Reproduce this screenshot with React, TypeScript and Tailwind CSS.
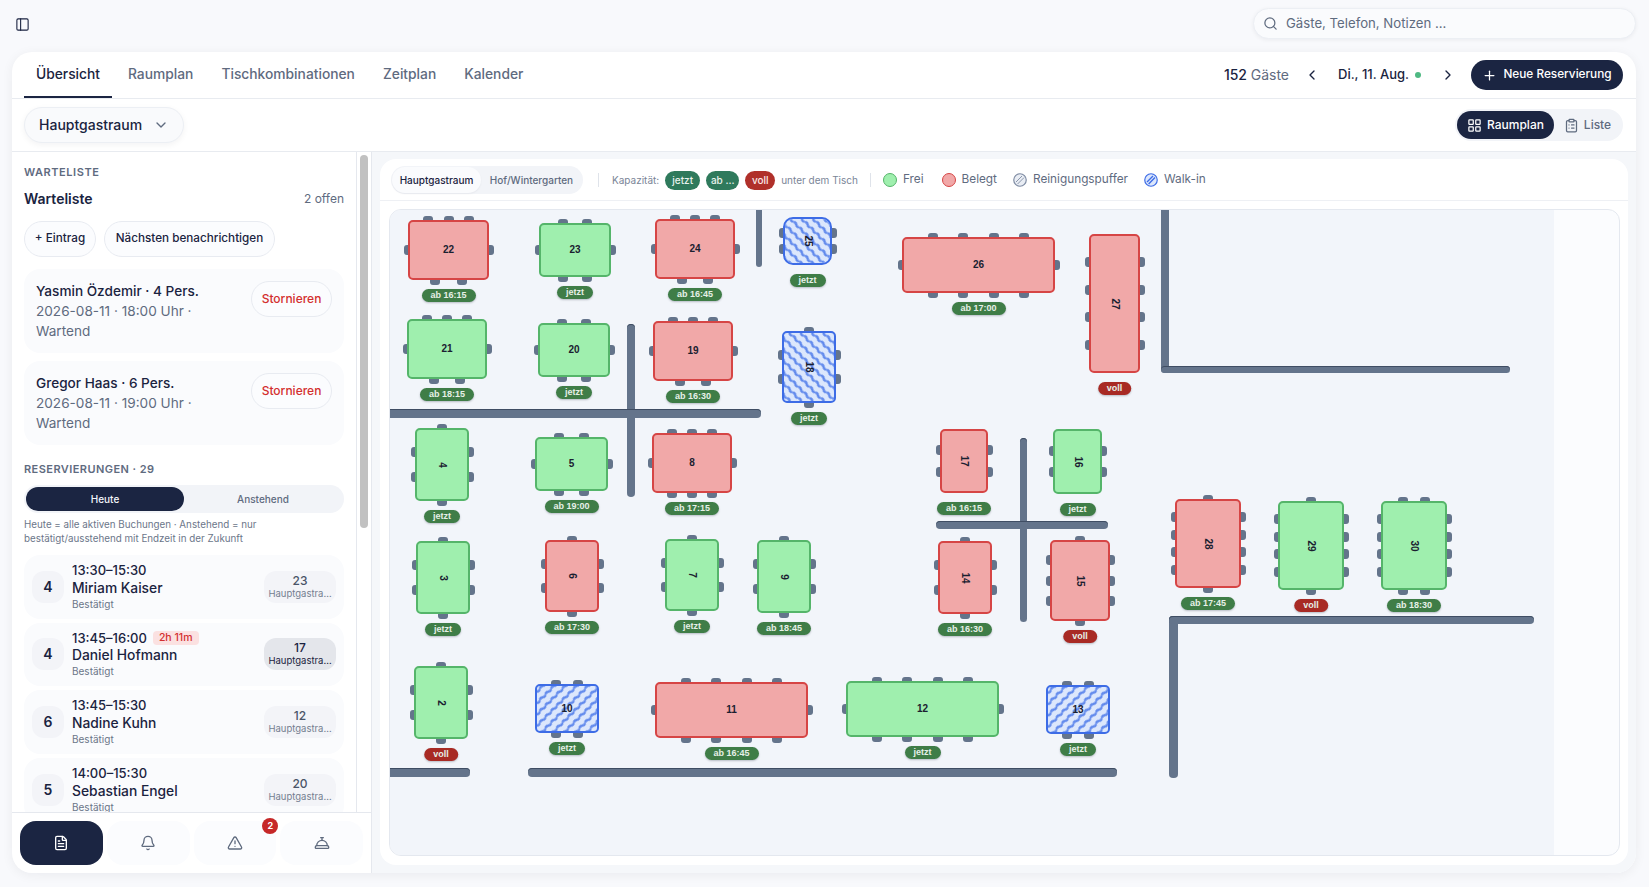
import {
  Bell,
  ChevronDown,
  ChevronLeft,
  ChevronRight,
  ClipboardList,
  ConciergeBell,
  FileText,
  LayoutGrid,
  PanelLeft,
  Plus,
  Search,
  TriangleAlert,
} from "lucide-react";

type Kind = "free" | "busy" | "walk";

type FloorTable = {
  n: number;
  x: number;
  y: number;
  w: number;
  h: number;
  kind: Kind;
  chairs: [number, number, number, number]; // top, bottom, left, right
  label: string;
  r?: number;
};

// page coordinates, converted to canvas coordinates when drawn
const ORIGIN_X = 390;
const ORIGIN_Y = 210;

const floorTables: FloorTable[] = [
  { n: 22, x: 408, y: 220, w: 81, h: 60, kind: "busy", chairs: [3, 2, 1, 1], label: "ab 16:15" },
  { n: 23, x: 539, y: 223, w: 72, h: 54, kind: "free", chairs: [2, 2, 1, 1], label: "jetzt" },
  { n: 24, x: 655, y: 219, w: 80, h: 60, kind: "busy", chairs: [3, 2, 1, 1], label: "ab 16:45" },
  { n: 25, x: 783, y: 217, w: 49, h: 48, kind: "walk", chairs: [0, 0, 2, 2], label: "jetzt", r: 10 },
  { n: 26, x: 902, y: 237, w: 153, h: 56, kind: "busy", chairs: [4, 4, 1, 1], label: "ab 17:00" },
  { n: 27, x: 1089, y: 234, w: 51, h: 139, kind: "busy", chairs: [0, 0, 4, 4], label: "voll" },
  { n: 21, x: 407, y: 319, w: 80, h: 60, kind: "free", chairs: [3, 2, 1, 1], label: "ab 18:15" },
  { n: 20, x: 538, y: 323, w: 72, h: 54, kind: "free", chairs: [2, 2, 1, 1], label: "jetzt" },
  { n: 19, x: 653, y: 321, w: 80, h: 60, kind: "busy", chairs: [3, 2, 1, 1], label: "ab 16:30" },
  { n: 18, x: 782, y: 331, w: 54, h: 72, kind: "walk", chairs: [1, 1, 2, 2], label: "jetzt" },
  { n: 4, x: 415, y: 428, w: 54, h: 73, kind: "free", chairs: [1, 1, 2, 2], label: "jetzt" },
  { n: 5, x: 535, y: 437, w: 73, h: 54, kind: "free", chairs: [2, 2, 1, 1], label: "ab 19:00" },
  { n: 8, x: 652, y: 433, w: 80, h: 60, kind: "busy", chairs: [3, 3, 1, 1], label: "ab 17:15" },
  { n: 17, x: 940, y: 429, w: 48, h: 64, kind: "busy", chairs: [0, 0, 2, 2], label: "ab 16:15" },
  { n: 16, x: 1053, y: 429, w: 49, h: 65, kind: "free", chairs: [0, 0, 2, 2], label: "jetzt" },
  { n: 3, x: 416, y: 541, w: 54, h: 73, kind: "free", chairs: [1, 1, 2, 2], label: "jetzt" },
  { n: 6, x: 545, y: 540, w: 54, h: 72, kind: "busy", chairs: [1, 1, 2, 2], label: "ab 17:30" },
  { n: 7, x: 665, y: 539, w: 54, h: 72, kind: "free", chairs: [1, 1, 2, 2], label: "jetzt" },
  { n: 9, x: 757, y: 540, w: 54, h: 73, kind: "free", chairs: [1, 1, 2, 2], label: "ab 18:45" },
  { n: 14, x: 938, y: 541, w: 54, h: 73, kind: "busy", chairs: [1, 1, 2, 2], label: "ab 16:30" },
  { n: 15, x: 1050, y: 540, w: 60, h: 81, kind: "busy", chairs: [1, 1, 3, 3], label: "voll" },
  { n: 28, x: 1175, y: 499, w: 66, h: 89, kind: "busy", chairs: [1, 1, 4, 4], label: "ab 17:45" },
  { n: 29, x: 1278, y: 501, w: 66, h: 89, kind: "free", chairs: [1, 1, 4, 4], label: "voll" },
  { n: 30, x: 1381, y: 501, w: 66, h: 89, kind: "free", chairs: [2, 2, 4, 4], label: "ab 18:30" },
  { n: 2, x: 414, y: 666, w: 54, h: 73, kind: "free", chairs: [1, 1, 2, 2], label: "voll" },
  { n: 10, x: 535, y: 684, w: 64, h: 49, kind: "walk", chairs: [2, 2, 0, 0], label: "jetzt" },
  { n: 11, x: 655, y: 682, w: 153, h: 56, kind: "busy", chairs: [4, 4, 1, 1], label: "ab 16:45" },
  { n: 12, x: 846, y: 681, w: 153, h: 56, kind: "free", chairs: [4, 4, 1, 1], label: "jetzt" },
  { n: 13, x: 1046, y: 685, w: 64, h: 49, kind: "walk", chairs: [2, 2, 0, 0], label: "jetzt" },
];

// x0, y0, x1, y1
const walls = [
  [756, 205, 762, 267],
  [627, 324, 635, 497],
  [385, 409, 761, 418],
  [1161, 205, 1169, 373],
  [1161, 366, 1510, 373],
  [1020, 438, 1027, 622],
  [936, 521, 1108, 529],
  [1169, 616, 1178, 778],
  [1169, 616, 1534, 624],
  [385, 768, 470, 777],
  [528, 768, 1117, 777],
];

const reservations = [
  { size: 4, time: "13:30–15:30", name: "Miriam Kaiser", table: 23 },
  { size: 4, time: "13:45–16:00", name: "Daniel Hofmann", table: 17, late: "2h 11m" },
  { size: 6, time: "13:45–15:30", name: "Nadine Kuhn", table: 12 },
  { size: 5, time: "14:00–15:30", name: "Sebastian Engel", table: 20 },
];

const waiting = [
  { name: "Yasmin Özdemir · 4 Pers.", info: "2026-08-11 · 18:00 Uhr · Wartend" },
  { name: "Gregor Haas · 6 Pers.", info: "2026-08-11 · 19:00 Uhr · Wartend" },
];

function Chairs({ count, side }: { count: number; side: "top" | "bottom" | "left" | "right" }) {
  const cls = {
    top: "-top-[4.5px] -translate-x-1/2",
    bottom: "-bottom-[4.5px] -translate-x-1/2",
    left: "-left-[4.5px] -translate-y-1/2",
    right: "-right-[4.5px] -translate-y-1/2",
  }[side];
  return (
    <>
      {Array.from({ length: count }).map((_, i) => {
        const pos = `${((i + 1) / (count + 1)) * 100}%`;
        const style = side === "top" || side === "bottom" ? { left: pos } : { top: pos };
        return <div key={i} style={style} className={`absolute h-[10px] w-[10px] rounded-[3px] bg-[#64748b] ${cls}`} />;
      })}
    </>
  );
}

function Hatch({ id, flip }: { id: string; flip: boolean }) {
  return (
    <svg className="absolute inset-0 h-full w-full">
      <defs>
        <pattern
          id={id}
          width="8"
          height="8"
          patternUnits="userSpaceOnUse"
          patternTransform={flip ? "rotate(45)" : "rotate(-45)"}
        >
          <path d="M0 4 Q2 2.5 4 4 T8 4" fill="none" stroke="#5f88ec" strokeWidth="2.2" />
        </pattern>
      </defs>
      <rect width="100%" height="100%" fill={`url(#${id})`} />
    </svg>
  );
}

function TableNode({ t }: { t: FloorTable }) {
  const surface = {
    free: "bg-[#9fefae] border-[#55b56a]",
    busy: "bg-[#f1a8a8] border-[#d64545]",
    walk: "bg-[#dce7fc] border-[#3d6ce6]",
  }[t.kind];
  const rotated = t.h > t.w || t.n === 25;
  return (
    <div className="absolute" style={{ left: t.x - ORIGIN_X, top: t.y - ORIGIN_Y, width: t.w, height: t.h }}>
      <Chairs count={t.chairs[0]} side="top" />
      <Chairs count={t.chairs[1]} side="bottom" />
      <Chairs count={t.chairs[2]} side="left" />
      <Chairs count={t.chairs[3]} side="right" />
      <div
        className={`absolute inset-0 flex items-center justify-center overflow-hidden border-2 ${surface}`}
        style={{ borderRadius: t.r ?? 5 }}
      >
        {t.kind === "walk" && <Hatch id={`hatch-${t.n}`} flip={rotated} />}
        <span
          className={`relative font-['Liberation_Sans',Arial,sans-serif] text-[10px] leading-none font-bold text-[#1a2030] ${
            rotated ? "rotate-90" : ""
          }`}
        >
          {t.n}
        </span>
      </div>
      <div
        className={`absolute top-[calc(100%+9px)] left-1/2 flex h-[13px] -translate-x-1/2 items-center rounded-full px-[9px] font-['Liberation_Sans',Arial,sans-serif] text-[9px] font-bold whitespace-nowrap text-[#e6f0e8] shadow-[0_1px_2px_rgba(15,23,42,0.25)] ${
          t.label === "voll" ? "bg-[#a82a24]" : "bg-[#3f7d47]"
        }`}
      >
        {t.label}
      </div>
    </div>
  );
}

function FloorPlan() {
  return (
    <div className="relative h-full w-[1164px] overflow-hidden bg-[#f2f5fa]">
      {walls.map(([x0, y0, x1, y1], i) => (
        <div
          key={i}
          className="absolute rounded-[4px] bg-[#64748b] shadow-[inset_0_1px_0_#3f4d63]"
          style={{ left: x0 - ORIGIN_X, top: y0 - ORIGIN_Y, width: x1 - x0, height: y1 - y0 }}
        />
      ))}
      {floorTables.map((t) => (
        <TableNode key={t.n} t={t} />
      ))}
    </div>
  );
}

function LegendDot({ kind }: { kind: "free" | "busy" | "clean" | "walk" }) {
  if (kind === "free") return <span className="h-[14px] w-[14px] rounded-full border-[1.5px] border-[#55b56a] bg-[#9fefae]" />;
  if (kind === "busy") return <span className="h-[14px] w-[14px] rounded-full border-[1.5px] border-[#d64545] bg-[#f1a8a8]" />;
  const stroke = kind === "walk" ? "#3d6ce6" : "#7f8ca3";
  const fill = kind === "walk" ? "#dce7fc" : "#e9edf4";
  return (
    <svg width="14" height="14" viewBox="0 0 14 14">
      <circle cx="7" cy="7" r="6.25" fill={fill} stroke={stroke} strokeWidth="1.2" />
      <path d="M3 9 L9 3 M4.6 11 L11 4.6" stroke={stroke} strokeWidth={kind === "walk" ? 1.4 : 0.9} />
    </svg>
  );
}

function Sidebar() {
  return (
    <aside className="flex w-[359px] shrink-0 flex-col">
      <div className="flex min-h-0 flex-1">
        <div className="w-[345px] shrink-0 overflow-hidden border-r border-[#e5e8ee] px-3 pt-3">
          <div className="text-[11px] leading-4 font-semibold tracking-[0.05em] text-[#5f6b7f]">WARTELISTE</div>
          <div className="mt-[9px] flex h-5 items-center justify-between">
            <span className="text-sm font-semibold text-[#1a2340]">Warteliste</span>
            <span className="text-xs text-[#5f6b7f]">2 offen</span>
          </div>
          <div className="mt-3 flex gap-2">
            <button className="h-9 w-[72px] rounded-full border border-[#e8ebf1] bg-[#fbfcfe] text-[11.7px] font-medium text-[#1a2340]">
              + Eintrag
            </button>
            <button className="h-9 w-[171px] rounded-full border border-[#e8ebf1] bg-[#fbfcfe] text-[11.7px] font-medium text-[#1a2340]">
              Nächsten benachrichtigen
            </button>
          </div>
          <div className="mt-3 flex flex-col gap-2">
            {waiting.map((w) => (
              <div key={w.name} className="flex items-start gap-3 rounded-2xl bg-[#fafbfd] p-3">
                <div className="w-[203px] text-[13.6px] leading-5">
                  <div className="font-medium text-[#1a2340]">{w.name}</div>
                  <div className="text-[#5f6b7f]">{w.info}</div>
                </div>
                <button className="ml-auto h-9 w-[81px] rounded-full border border-[#e8ebf1] bg-[#fbfcfe] text-xs font-medium text-[#d32f2f]">
                  Stornieren
                </button>
              </div>
            ))}
          </div>
          <div className="mt-4 text-[11px] leading-4 font-semibold tracking-[0.04em] text-[#5f6b7f]">
            RESERVIERUNGEN · 29
          </div>
          <div className="mt-2 flex h-7 items-center rounded-full bg-[#f2f4f8] p-[2px]">
            <div className="flex h-6 flex-1 items-center justify-center rounded-full bg-[#1b2542] text-[10px] font-medium text-[#f4f6fa]">
              Heute
            </div>
            <div className="flex h-6 flex-1 items-center justify-center text-[10px] font-medium text-[#5f6b7f]">
              Anstehend
            </div>
          </div>
          <p className="mt-[5px] text-[9.8px] leading-[14px] text-[#6b7689]">
            Heute = alle aktiven Buchungen · Anstehend = nur bestätigt/ausstehend mit Endzeit in der Zukunft
          </p>
          <div className="mt-[9px] flex flex-col gap-1">
            {reservations.map((r) => (
              <div key={r.name} className="flex h-[63.67px] shrink-0 items-center gap-2 rounded-2xl bg-[#fafbfd] px-2">
                <div className="flex h-8 w-8 items-center justify-center rounded-xl bg-[#f3f4f8] text-sm font-semibold text-[#1a2340]">
                  {r.size}
                </div>
                <div className="min-w-0 flex-1">
                  <div className="flex h-4 items-center gap-[6px] text-[13px] font-medium text-[#1a2340]">
                    {r.time}
                    {r.late && (
                      <span className="rounded-[4px] bg-[#fbe1e1] px-[6px] py-px text-[10.5px] leading-3 font-medium text-[#d32f2f]">
                        {r.late}
                      </span>
                    )}
                  </div>
                  <div className="text-[13.8px] leading-[18px] font-medium text-[#1a2340]">{r.name}</div>
                  <div className="text-[10px] leading-[14px] text-[#6b7689]">Bestätigt</div>
                </div>
                <div
                  className={`flex h-8 w-[72px] flex-col items-center justify-center rounded-xl ${
                    r.late ? "bg-[#e4e6eb] text-[#1a2340]" : "bg-[#f3f4f8] text-[#4a5568]"
                  }`}
                >
                  <span className="text-xs leading-[14px] font-medium">{r.table}</span>
                  <span className={`text-[9.5px] leading-3 whitespace-nowrap ${r.late ? "" : "text-[#737e90]"}`}>
                    Hauptgastra…
                  </span>
                </div>
              </div>
            ))}
          </div>
        </div>
        <div className="flex-1 pt-[3px]">
          <div className="mx-auto h-[373px] w-2 rounded-full bg-[#c1c1c1]" />
        </div>
      </div>
      <div className="grid h-[61px] shrink-0 grid-cols-4 gap-1 border-t border-[#e5e8ee] px-2 pt-2 pb-2">
        <button className="flex items-center justify-center rounded-2xl bg-[#1b2542] text-white">
          <FileText size={16} />
        </button>
        <button className="flex items-center justify-center rounded-2xl bg-[#fbfcfe] text-[#5f6b7f]">
          <Bell size={16} />
        </button>
        <button className="relative flex items-center justify-center rounded-2xl bg-[#fbfcfe] text-[#5f6b7f]">
          <TriangleAlert size={16} />
          <span className="absolute -top-[3px] right-[-2px] flex h-4 w-4 items-center justify-center rounded-full bg-[#c62828] text-[9px] font-bold text-white">
            2
          </span>
        </button>
        <button className="flex items-center justify-center rounded-2xl bg-[#fbfcfe] text-[#5f6b7f]">
          <ConciergeBell size={16} />
        </button>
      </div>
    </aside>
  );
}

export default function App() {
  return (
    <div className="flex h-[887px] w-[1649px] flex-col overflow-hidden bg-[#f8f9fc] font-['Inter',sans-serif]">
      <div className="flex h-[52px] shrink-0 items-start justify-between pr-[13px]">
        <PanelLeft size={15} strokeWidth={1.75} className="mt-[17px] ml-[15px] text-[#1a2340]" />
        <div className="mt-2 flex h-[31px] w-[383px] items-center gap-2 rounded-full border border-[#eceff4] bg-[#fafbfd] pl-[9px] shadow-[0_1px_4px_rgba(15,23,42,0.06)]">
          <Search size={15} className="text-[#5f6b7f]" />
          <span className="text-[13.2px] text-[#5f6b7f]">Gäste, Telefon, Notizen ...</span>
        </div>
      </div>

      <div className="mr-[13px] ml-3 flex h-[821px] flex-col overflow-hidden rounded-[20px] bg-white shadow-[0_2px_12px_rgba(15,23,42,0.06)]">
        <header className="flex h-[47px] shrink-0 items-stretch justify-between border-b border-[#e8ebf0] pr-[13px] pl-3">
          <nav className="flex gap-1">
            {["Übersicht", "Raumplan", "Tischkombinationen", "Zeitplan", "Kalender"].map((tab, i) => (
              <div
                key={tab}
                className={`flex items-center border-b-2 px-3 text-[13.8px] font-medium ${
                  i === 0 ? "w-[88px] border-[#1b2542] text-[#1a2340]" : "border-transparent text-[#5f6b7f]"
                }`}
              >
                {tab}
              </div>
            ))}
          </nav>
          <div className="flex items-center">
            <span className="text-sm font-medium text-[#1a2340]">
              152 <span className="font-normal text-[#5f6b7f]">Gäste</span>
            </span>
            <ChevronLeft size={16} className="ml-[15px] text-[#1a2340]" />
            <span className="ml-[18px] text-[13px] font-medium whitespace-nowrap text-[#1a2340]">Di., 11. Aug.</span>
            <span className="ml-[6px] h-[6px] w-[6px] rounded-full bg-[#4fb983]" />
            <ChevronRight size={16} className="ml-[19px] text-[#1a2340]" />
            <button className="ml-[15px] flex h-[30px] w-[152px] items-center justify-center gap-[6px] rounded-full bg-[#1b2542] text-[11.8px] font-medium text-white">
              <Plus size={15} />
              Neue Reservierung
            </button>
          </div>
        </header>

        <div className="flex h-[53px] shrink-0 items-center justify-between border-b border-[#e8ebf0] pr-[13px] pl-3">
          <div className="flex h-9 w-[160px] items-center rounded-full border border-[#eceff4] bg-[#f9fafc] pl-[14px] text-sm font-medium text-[#1a2340] shadow-[0_2px_6px_rgba(15,23,42,0.05)]">
            Hauptgastraum
            <ChevronDown size={16} className="ml-[11px] text-[#5f6b7f]" />
          </div>
          <div className="flex h-8 w-[168px] items-center rounded-full bg-[#f2f4f8] p-[2px]">
            <div className="flex h-7 w-[97px] items-center justify-center gap-[5px] rounded-full bg-[#1b2542] text-xs font-medium text-white">
              <LayoutGrid size={15} />
              Raumplan
            </div>
            <div className="flex flex-1 items-center justify-center gap-[5px] text-xs font-medium text-[#5f6b7f]">
              <ClipboardList size={15} />
              Liste
            </div>
          </div>
        </div>

        <div className="flex min-h-0 flex-1">
          <Sidebar />
          <main className="flex min-w-0 flex-1 border-l border-[#e5e8ee] bg-[#f5f7fa] pt-[7px] pr-2 pb-2 pl-2">
            <div className="flex min-w-0 flex-1 flex-col rounded-2xl bg-white">
              <div className="flex h-[42px] shrink-0 items-center border-b border-[#eef0f4] pt-px pl-[11px]">
                <div className="flex h-7 w-[192px] items-center rounded-full bg-[#f2f4f8] p-px text-[10px] font-medium">
                  <div className="flex h-[26px] w-[89px] items-center justify-center rounded-full bg-[#fafbfd] text-[#1a2340] shadow-[0_1px_2px_rgba(15,23,42,0.05)]">
                    Hauptgastraum
                  </div>
                  <div className="flex-1 text-center text-[#5f6b7f]">Hof/Wintergarten</div>
                </div>
                <span className="ml-[15px] h-[14px] w-px bg-[#dfe3ea]" />
                <span className="ml-[13px] text-[10px] text-[#7a8597]">Kapazität:</span>
                <span className="ml-[6px] flex h-[19px] w-[35px] items-center justify-center rounded-full bg-[#2f7a5c] text-[10px] font-medium text-[#e8f3ee]">
                  jetzt
                </span>
                <span className="ml-[6px] flex h-[19px] w-[33px] items-center justify-center rounded-full bg-[#2f7a5c] text-[10px] font-medium text-[#e8f3ee]">
                  ab ...
                </span>
                <span className="ml-[6px] flex h-[19px] w-[30px] items-center justify-center rounded-full bg-[#b0302a] text-[10px] font-medium text-[#fbeaea]">
                  voll
                </span>
                <span className="ml-[6px] text-[10px] text-[#7a8597]">unter dem Tisch</span>
                <span className="ml-[12px] h-[14px] w-px bg-[#dfe3ea]" />
                <div className="ml-[12px] flex items-center gap-4 text-[11.8px] text-[#5f6b7f]">
                  <span className="mr-[2px] flex items-center gap-[6px]">
                    <LegendDot kind="free" />
                    Frei
                  </span>
                  <span className="flex items-center gap-[6px]">
                    <LegendDot kind="busy" />
                    Belegt
                  </span>
                  <span className="flex items-center gap-[6px]">
                    <LegendDot kind="clean" />
                    Reinigungspuffer
                  </span>
                  <span className="flex items-center gap-[6px]">
                    <LegendDot kind="walk" />
                    Walk-in
                  </span>
                </div>
              </div>
              <div className="min-h-0 flex-1 pt-2 pr-2 pb-[9px] pl-[9px]">
                <div className="h-full overflow-hidden rounded-xl border border-[#e4e8ef] bg-[#fbfcfe]">
                  <FloorPlan />
                </div>
              </div>
            </div>
          </main>
        </div>
      </div>
    </div>
  );
}
